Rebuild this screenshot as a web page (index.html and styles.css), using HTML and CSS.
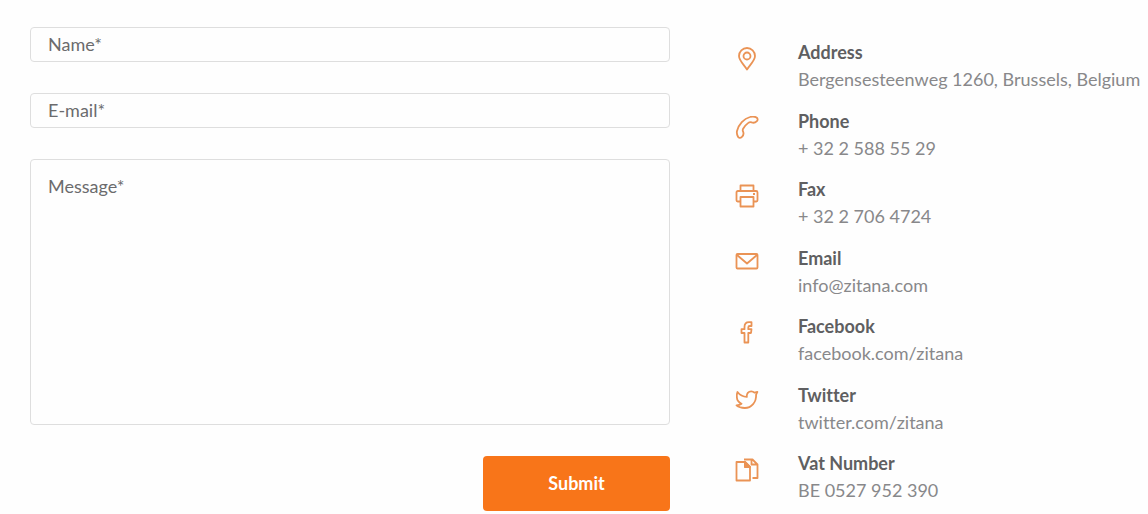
FILE: index.html
```html
<!DOCTYPE html>
<html lang="en">
<head>
<meta charset="utf-8">
<meta name="viewport" content="width=device-width, initial-scale=1">
<title>Contact</title>
<link rel="stylesheet" href="styles.css">
</head>
<body>
<main class="contact">
  <form class="form">
    <input class="field" type="text" name="name" placeholder="Name*" aria-label="Name" required>
    <input class="field" type="email" name="email" placeholder="E-mail*" aria-label="E-mail" required>
    <textarea class="field message" name="message" placeholder="Message*" aria-label="Message" required></textarea>
    <button class="submit" type="submit">Submit</button>
  </form>
  <ul class="details">
    <li class="item">
      <svg class="icon" viewBox="0 0 24 24" aria-hidden="true"><path d="M12 22.500C9.500 18.500 4 13.500 4 9a8 8 0 0 1 16 0c0 4.500-5.500 9.500-8 13.500z"/><circle cx="12" cy="9" r="3.500"/></svg>
      <div><h2 class="label">Address</h2><p class="value">Bergensesteenweg 1260, Brussels, Belgium</p></div>
    </li>
    <li class="item">
      <svg class="icon" viewBox="0 0 24 24" aria-hidden="true"><path d="M2 15C3.500 8.500 9 2.500 15 1c2.500-.7 4.500-.6 6.300.4 1.600.8 1.700 2.600.6 3.700-1.500 1.500-3.500 2-5.200 1.300-1.200-.6-2.200-.5-3.400.5-2 1.500-4 3.600-5.200 5.800-.6 1.100-.5 1.900 0 3 .8 1.900-.1 4.300-1.400 5.500-1.200 1.100-3 .9-3.700-.4C2.100 19.100 1.500 17.200 2 15z"/></svg>
      <div><h2 class="label">Phone</h2><p class="value">+ 32 2 588 55 29</p></div>
    </li>
    <li class="item">
      <svg class="icon" viewBox="0 0 24 24" aria-hidden="true"><path d="M5.500 7V1.500h13V7M5.500 17.500H2.700c-.7 0-1.200-.5-1.200-1.200V8.500c0-.8.600-1.500 1.400-1.500h18.200c.8 0 1.400.7 1.400 1.500v7.800c0 .7-.5 1.200-1.200 1.200h-2.800M5.500 13h13v9.500h-13zM18 10h2"/></svg>
      <div><h2 class="label">Fax</h2><p class="value">+ 32 2 706 4724</p></div>
    </li>
    <li class="item">
      <svg class="icon" viewBox="0 0 24 24" aria-hidden="true"><rect x="1.500" y="1" width="21" height="14.500" rx="1"/><path d="M2 2l10 8.500L22 2"/></svg>
      <div><h2 class="label">Email</h2><p class="value"><a class="link" href="mailto:info@zitana.com">info@zitana.com</a></p></div>
    </li>
    <li class="item">
      <svg class="icon" viewBox="0 0 24 24" aria-hidden="true"><path d="M9.500 21.500V12H6.500V8.200h3V6c0-3.200 1.600-4.800 4.500-4.800h2.500V5h-1.700c-1 0-1.500.5-1.500 1.400v1.800h3.200L16 12h-2.700v9.500z"/></svg>
      <div><h2 class="label">Facebook</h2><p class="value"><a class="link" href="https://facebook.com/zitana">facebook.com/zitana</a></p></div>
    </li>
    <li class="item">
      <svg class="icon" viewBox="0 0 24 24" aria-hidden="true"><path d="M2.500 2c2.300 3 5.300 4.700 9.300 4.900-.5-3.300 1.700-5.500 4.400-5.500 1.400 0 2.400.5 3.200 1.300l3-.8-1.300 2.700c.4 7.500-4.600 13.400-11.300 13.400-3.300 0-6.300-.8-8.300-2.600 2-.1 3.700-.6 5-1.700C4 12.500 2 10.300 1.900 7.500 1.700 5.500 1.800 3.500 2.500 2z"/></svg>
      <div><h2 class="label">Twitter</h2><p class="value"><a class="link" href="https://twitter.com/zitana">twitter.com/zitana</a></p></div>
    </li>
    <li class="item">
      <svg class="icon" viewBox="0 0 24 24" aria-hidden="true"><path d="M10 4H1.500v18.500H15V9zM10 4v5h5M9 1.500h8.500l5 5v13.500H17.500M16.500 1.500v5h6"/><path class="fold" d="M10 4v5h5z"/></svg>
      <div><h2 class="label">Vat Number</h2><p class="value">BE 0527 952 390</p></div>
    </li>
  </ul>
</main>
</body>
</html>
```
FILE: styles.css
```css
* {
  box-sizing: border-box;
}

body {
  margin: 0;
  background: #fefefe;
  color: #5f5f61;
  font: 18px/27px Lato, "Open Sans", sans-serif;
  font-variant-ligatures: no-common-ligatures;
}

.contact {
  display: grid;
  grid-template-columns: minmax(0, 640fr) minmax(0, 413fr);
  column-gap: 65px;
  padding: 27px 0 3px 30px;
}

.form {
  display: flex;
  flex-direction: column;
  gap: 31px;
}

.field {
  display: block;
  width: 100%;
  height: 35px;
  margin: 0;
  padding: 0 17px 2px;
  border: 1px solid #dedede;
  border-radius: 4px;
  background: #fefefe;
  color: inherit;
  font: inherit;
}

.field::placeholder {
  color: #6b6b6d;
  opacity: 1;
}

.message {
  height: 266px;
  padding-top: 13px;
  resize: none;
}

.submit {
  align-self: flex-end;
  width: 187px;
  height: 55px;
  border: 0;
  border-radius: 4px;
  background: #f87519;
  color: #fff;
  font: inherit;
  font-weight: 700;
}

.details {
  display: flex;
  flex-direction: column;
  justify-content: space-between;
  margin: 0;
  padding: 12px 0 7px;
  list-style: none;
}

.item {
  display: flex;
  gap: 39px;
}

.icon {
  flex: none;
  width: 24px;
  height: 24px;
  margin-top: 8px;
  fill: none;
  stroke: #ea9355;
  stroke-width: 1.8;
  stroke-linejoin: round;
}

.fold {
  fill: #ea9355;
}

.label,
.value {
  margin: 0;
  font-size: 18px;
  line-height: 27px;
}

.label {
  font-weight: 700;
}

.value {
  color: #88888a;
}

.link {
  color: inherit;
  text-decoration: none;
}
```
